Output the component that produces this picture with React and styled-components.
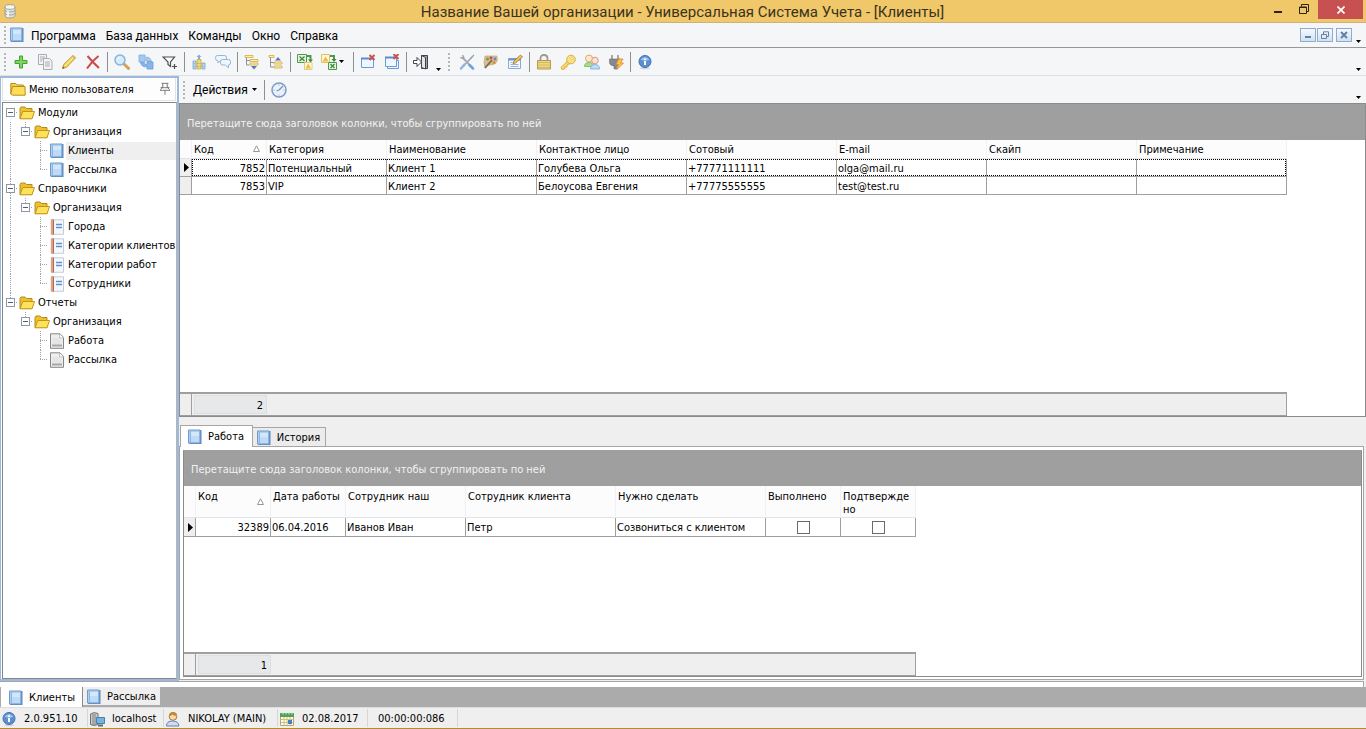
import React, { useState } from "react";
import styled, { createGlobalStyle, css } from "styled-components";

const GlobalStyle = createGlobalStyle`
  * {
    box-sizing: border-box;
  }
  body {
    margin: 0;
    background: #efefef;
  }
  button, input {
    font: inherit;
    color: inherit;
    margin: 0;
  }
  svg {
    display: block;
    flex: none;
  }
`;

const gridFont = `"DejaVu Sans Condensed", Tahoma, "Noto Sans", sans-serif`;
const menuFont = `Roboto, "Segoe UI", sans-serif`;

const Window = styled.div`
  display: flex;
  flex-direction: column;
  min-height: 100vh;
  font-family: ${gridFont};
  font-size: 11px;
  line-height: 14px;
  color: #000;
  border-bottom: 1px solid #b48a2c;
`;

const PlainButton = styled.button`
  display: flex;
  align-items: center;
  justify-content: center;
  padding: 0;
  border: 0;
  background: none;
  cursor: default;
`;

/* title bar */

const TitleBar = styled.header`
  display: flex;
  align-items: center;
  height: 23px;
  padding-left: 2px;
  background: #f0c869;
  border-bottom: 1px solid #cbb27a;
`;

const TitleText = styled.h1`
  flex: 1;
  margin: 0;
  padding: 2px 0 0 82px;
  font-family: ${menuFont};
  font-size: 15px;
  line-height: 20px;
  font-weight: 400;
  text-align: center;
  white-space: nowrap;
  color: #3b3320;
`;

const WindowButton = styled(PlainButton)`
  align-self: flex-start;
  width: 26px;
  height: 18px;
`;

const CloseButton = styled(WindowButton)`
  width: 45px;
  height: 19px;
  margin: 0 3px 0 1px;
  background: #c75050;
`;

/* menu and toolbars */

const MenuBar = styled.nav`
  display: flex;
  align-items: center;
  height: 25px;
  padding: 0 3px;
  background: #f5f6f8;
  border-bottom: 1px solid #95979c;
  font-family: ${menuFont};
  font-size: 12px;
`;

const Grip = styled.span`
  flex: none;
  width: 2px;
  height: 18px;
  margin: 0 3px 0 1px;
  background: repeating-linear-gradient(#b4b6ba 0 2px, transparent 2px 4px);
`;

const MiddleGrip = styled(Grip)`
  margin: 0 5px;
`;

const MenuItem = styled(PlainButton)`
  height: 24px;
  padding-top: 1px;
  margin-left: ${(p) => (p.$first ? 6 : 10)}px;
  white-space: nowrap;
`;

const Spacer = styled.span`
  flex: 1;
`;

const MdiButton = styled(PlainButton)`
  width: 16px;
  height: 14px;
  margin-right: ${(p) => p.$gap || 1}px;
  border: 1px solid #92abc8;
  background: linear-gradient(#f4f9ff, #d0e1f5);
`;

const Overflow = styled(PlainButton)`
  align-self: flex-end;
  width: 10px;
  height: 12px;
`;

const ToolBar = styled.div`
  display: flex;
  align-items: center;
  height: 28px;
  padding: 0 3px;
  background: #f5f6f8;
  border-bottom: 1px solid #dcdfe3;
`;

const ToolButton = styled(PlainButton)`
  flex: none;
  gap: 2px;
  width: ${(p) => (p.$drop ? 34 : 24)}px;
  height: 24px;
  padding-right: ${(p) => (p.$drop ? 3 : 0)}px;
`;

const Separator = styled.span`
  flex: none;
  width: 1px;
  height: 20px;
  margin: 0 2px;
  background: #8c8e92;
`;

const ActionBar = styled(ToolBar)`
  border-bottom: 1px solid #8b8b8b;
  font-family: ${menuFont};
  font-size: 12px;
`;

const ActionButton = styled(PlainButton)`
  gap: 4px;
  height: 24px;
  padding: 0 5px;
`;

/* left panel */

const Main = styled.main`
  flex: 1;
  display: flex;
  background: #efefef;
`;

const SidePanel = styled.aside`
  flex: none;
  display: flex;
  flex-direction: column;
  width: 179px;
  background: #fff;
  border: 2px solid #9db9dc;
  border-left-width: 1px;
`;

const PanelHead = styled.div`
  display: flex;
  align-items: center;
  gap: 3px;
  height: 23px;
  margin: 0 1px 1px;
  padding: 0 3px 0 7px;
  background: #fdfdfe;
  border: 1px solid #dfe3e8;
  border-top: 0;
`;

const PanelTitle = styled.h2`
  flex: 1;
  margin: 0;
  padding-top: 1px;
  font-size: 11px;
  font-weight: 400;
`;

const Tree = styled.ul`
  flex: 1;
  margin: 0 0 0 1px;
  padding: 0;
  list-style: none;
  background: #fff;
  border: 1px solid #868686;
  border-right-color: #b5b5b5;
`;

const dots = "#a0a0a0 0 1px, transparent 1px 2px";
const guideHeight = { through: "100%", tee: "100%", end: "10px", start: "0" };

const TreeRow = styled.li`
  display: flex;
  align-items: center;
  height: 19px;
`;

const Guide = styled.span`
  flex: none;
  display: flex;
  align-items: center;
  justify-content: center;
  width: 15px;
  height: 19px;
  background-repeat: no-repeat;
  ${(p) =>
    p.$line &&
    css`
      background-image: repeating-linear-gradient(${dots}), repeating-linear-gradient(90deg, ${dots});
      background-size: 1px ${guideHeight[p.$line]}, ${p.$line === "through" ? "0 0" : "8px 1px"};
      background-position: 7px 0, 7px 9px;
    `}
`;

const Expander = styled(PlainButton)`
  width: 9px;
  height: 9px;
  border: 1px solid #8e98a5;
  background: #fff;
`;

const TreeLabel = styled(PlainButton)`
  flex: 1;
  justify-content: flex-start;
  height: 18px;
  margin-left: 1px;
  padding-left: 2px;
  white-space: nowrap;
  background: ${(p) => (p.$selected ? "#efefef" : "none")};
`;

const IconSlot = styled.span`
  flex: none;
  display: flex;
  margin-left: 1px;
`;

/* grids */

const Content = styled.section`
  flex: 1;
  min-width: 0;
  display: flex;
  flex-direction: column;
`;

const GridBox = styled.div`
  display: flex;
  flex-direction: column;
  flex: ${(p) => p.$grow} 1 0;
  background: #fff;
  border: 1px solid #8b8b8b;
  border-top-color: #9f9f9f;
`;

const GroupBar = styled.div`
  display: flex;
  align-items: center;
  height: 35px;
  padding: 2px 0 0 7px;
  background: #9f9f9f;
  color: #f1f1f1;
`;

const Table = styled.table`
  table-layout: fixed;
  width: ${(p) => p.$width}px;
  border-collapse: separate;
  border-spacing: 0;
`;

const HeadCell = styled.th`
  height: ${(p) => (p.$tall ? 32 : 19)}px;
  padding: ${(p) => (p.$tall ? 4 : 3)}px 2px 0;
  vertical-align: top;
  font-weight: 400;
  line-height: 13px;
  text-align: left;
  overflow-wrap: anywhere;
  background: #fcfcfd;
  border-right: 1px solid #f0f1f6;
  border-bottom: 1px solid #e3e4ea;
`;

const SortHead = styled.span`
  display: flex;
  align-items: flex-start;
  justify-content: space-between;
  padding-right: 4px;
`;

const SortMark = styled.span`
  padding-top: ${(p) => (p.$tall ? 8 : 2)}px;
`;

const focusX = "repeating-linear-gradient(90deg, #000 0 1px, transparent 1px 2px)";
const focusY = "repeating-linear-gradient(#000 0 1px, transparent 1px 2px)";

const Cell = styled.td`
  height: ${(p) => (p.$tall ? 19 : 18)}px;
  padding: 2px 1px 0;
  text-align: ${(p) => p.$align || "left"};
  white-space: nowrap;
  border-right: 1px solid #9f9f9f;
  border-bottom: 1px solid #9f9f9f;
  ${(p) =>
    p.$focused &&
    css`
      background-image: ${focusX}, ${focusX}, ${focusY}, ${focusY};
      background-position: left top, left bottom, left top, right top;
      background-size: 100% 1px, 100% 1px, ${p.$first ? "1px 100%" : "0 0"}, ${p.$last ? "1px 100%" : "0 0"};
      background-repeat: no-repeat;
    `}
`;

const MarkCell = styled(Cell)`
  padding: 0 3px;
  background: #efefef;
`;

const CheckCell = styled(Cell)`
  padding: 0 1px;
`;

const CheckBox = styled.input`
  display: block;
  appearance: none;
  width: 13px;
  height: 13px;
  margin: 0 auto;
  border: 1px solid #6b6b6b;
  background: #fff;
`;

const Footer = styled.div`
  display: flex;
  align-items: center;
  width: ${(p) => p.$width}px;
  height: 24px;
  margin-top: auto;
  background: #efefef;
  border-top: 2px solid #9f9f9f;
  border-right: 1px solid #9f9f9f;
  border-bottom: 1px solid #9f9f9f;
`;

const FooterMark = styled.span`
  width: 12px;
  height: 100%;
  border-right: 1px solid #9f9f9f;
`;

const FooterCount = styled.output`
  width: 73px;
  height: 19px;
  margin-left: 2px;
  padding: 3px 3px 0;
  text-align: right;
  background: #e7e8ea;
  border: 1px solid #dcdee0;
`;

/* tabs */

const TabStrip = styled.div`
  display: flex;
  align-items: flex-end;
  height: 29px;
  padding-left: 1px;
`;

const Tab = styled(PlainButton)`
  gap: 5px;
  width: 73px;
  height: ${(p) => (p.$active ? 22 : 19)}px;
  padding: ${(p) => (p.$active ? "0 2px 0 0" : "2px 2px 0 0")};
  margin-bottom: ${(p) => (p.$active ? -1 : 0)}px;
  border: 1px solid #a6a6a6;
  border-bottom-width: 0;
  border-left-width: ${(p) => (p.$active ? 1 : 0)}px;
  background: ${(p) => (p.$active ? "#fff" : "#ececec")};
  z-index: ${(p) => (p.$active ? 1 : 0)};
`;

const TabPage = styled.div`
  display: flex;
  flex: 227 1 0;
  margin: 0 2px 1px 0;
  padding: 3px 1px 2px 3px;
  background: #fff;
  border: 1px solid #a6a6a6;
`;

const DockEdge = styled.div`
  height: 6px;
  margin-right: 2px;
  background: #fff;
  border-top: 1px solid #a6a6a6;
  border-right: 1px solid #a6a6a6;
`;

const WindowTabs = styled.div`
  display: flex;
  align-items: flex-start;
  height: 21px;
  padding-left: 1px;
  background: #ababab;
  border-bottom: 1px solid #dedede;
`;

const WindowTab = styled(PlainButton)`
  gap: 5px;
  width: ${(p) => (p.$active ? 82 : 77)}px;
  height: ${(p) => (p.$active ? 20 : 18)}px;
  padding-top: 2px;
  background: ${(p) => (p.$active ? "#fff" : "#efefef")};
  border-right: 1px solid ${(p) => (p.$active ? "#8b8b8b" : "#efefef")};
`;

const StatusBar = styled.footer`
  display: flex;
  align-items: center;
  height: 20px;
  background: #efefef;
`;

const StatusItem = styled.div`
  display: flex;
  align-items: center;
  gap: 7px;
  width: ${(p) => p.$width}px;
  height: 18px;
  padding: 2px 0 0 ${(p) => (p.$plain ? 10 : 1)}px;
  border-right: 1px solid #d6d6d6;
  white-space: nowrap;
`;

const shapes = {
  plus: <path d="M6.5 2h3v4.5H14v3H9.5V14h-3V9.5H2v-3h4.5z" fill="#7fd45f" stroke="#3fa52d" />,
  copy: (
    <g fill="#f3f4f5" stroke="#a9adb3">
      <path d="M1.5.5h8v10h-8z" />
      <path d="M3 3h5M3 5h5M3 7h2" />
      <path d="M6.5 4.5h6L15 7v8.5H6.5z" />
      <path d="M8 8h5M8 10h5M8 12h5" />
    </g>
  ),
  pencil: (
    <g strokeLinejoin="round">
      <path d="M1.5 14.5l1.2-4L12 1.5l2.6 2.3-9 9.4z" fill="#f5d65c" stroke="#c39a2c" />
      <path d="M4 12l8.5-9" stroke="#fff0a8" />
      <path d="M1.5 14.5l.6-2 1.4 1.4z" fill="#5a4a30" />
      <path d="M11 2.5l2.6 2.4 1-1.1L12 1.5z" fill="#dba98c" />
    </g>
  ),
  remove: (
    <path d="M2.5 2c3 3.5 7 8 11.5 12M13.5 2C9 5.5 5 10 2 14.5" fill="none" stroke="#c94b4b" strokeWidth="2" />
  ),
  search: (
    <g>
      <path d="M9.5 9.5l5 4.8" stroke="#d3a25a" strokeWidth="3" strokeLinecap="round" />
      <circle cx="6" cy="6" r="5" fill="#d4ecfb" stroke="#86b4da" strokeWidth="1.5" />
      <path d="M3.5 6a2.5 2.5 0 0 1 3-2.6" fill="none" stroke="#fff" />
    </g>
  ),
  refresh: (
    <g>
      <path d="M1 1h6v2.5Q12.5 2 13.5 8h-3q-.5-2-3.5-2v2.5L1 8z" fill="#a4c9ee" stroke="#7fadde" strokeWidth=".8" />
      <path d="M15 15H9v-2.5Q3.500 14 2.500 8l3 .5q.5 2 3.500 2v-3l6 .5z" fill="#86b6e6" stroke="#6b9dd3" strokeWidth=".8" />
    </g>
  ),
  filter: (
    <g fill="none" stroke="#4a4d52" strokeWidth="1.2">
      <path d="M1 3h11.5L8.5 8v4.5L6 10.5V8z" fill="#fff" />
      <path d="M12.5 10v5M10 12.5h5" />
    </g>
  ),
  sum: (
    <g>
      <path d="M2 7h3v8H2zM11 9h3v6h-3z" fill="#b9d6f2" stroke="#79a6d6" strokeWidth=".8" />
      <path d="M6 5.5h4V15H6z" fill="#f6da6b" stroke="#c9a43a" strokeWidth=".8" />
      <path d="M2 9.5h12M2 12.5h12" stroke="#a9b79a" strokeWidth=".8" />
      <path d="M8 .5L10.5 3H9v2H7V3H5.5z" fill="#7eaee0" />
    </g>
  ),
  chat: (
    <g fill="#eef5fc" stroke="#94b4d8">
      <path d="M2.5 1.5h7q2 0 2 2V5q0 2-2 2H5L3 9V7Q.5 6.5.5 4.5v-1q0-2 2-2z" />
      <path d="M7.5 5.5h6q2 0 2 2V9q0 2-2 2v3l-3-3h-3q-2 0-2-2V7.5q0-2 2-2z" />
    </g>
  ),
  expand: (
    <g>
      <path d="M2.5 2v9h3M2.5 6.5h4" fill="none" stroke="#8e9196" />
      <path d="M1 1.5h8v2H1zM6 5.5h8v2H6zM6 9h8v2H6z" fill="#fff0b2" stroke="#d4a83f" strokeWidth=".8" />
      <path d="M7 12h6l-3 3.5z" fill="#5a78b8" />
    </g>
  ),
  collapse: (
    <g>
      <path d="M2.5 2v11h3M2.5 8.5h4" fill="none" stroke="#8e9196" />
      <path d="M1 1.5h5v2H1zM6 8h8v2H6zM6 12h8v2H6z" fill="#fff0b2" stroke="#d4a83f" strokeWidth=".8" />
      <path d="M7 6.5h6L10 3z" fill="#5a78b8" />
    </g>
  ),
  exportXls: (
    <g>
      <path d="M.5.5h9v8h-9z" fill="#e6f5df" stroke="#4f9a4a" />
      <path d="M2.5 2.5l5 4.500M7.500 2.500L2.500 7" stroke="#3d8a3a" strokeWidth="1.3" />
      <path d="M10 2h3.5v4" fill="none" stroke="#4f9a4a" strokeWidth="2" />
      <path d="M11 5.500h5l-2.500 3z" fill="#3d8a3a" />
      <path d="M7.500 8.500H15v7H7.500z" fill="#fff7d8" stroke="#dcbf6c" strokeWidth=".8" />
      <path d="M8.500 14.500l2.700-5 2.700 5z" fill="#f1bb35" />
    </g>
  ),
  importXls: (
    <g>
      <path d="M.5.5h8v8h-8z" fill="#fff7d8" stroke="#dcbf6c" />
      <path d="M1.5 7.5l3-5 3 5z" fill="#f1bb35" />
      <path d="M9 2h4v4" fill="none" stroke="#4f9a4a" strokeWidth="2" />
      <path d="M10.5 5h5L13 8z" fill="#3d8a3a" />
      <path d="M7.5 8.5h8v7h-8z" fill="#e6f5df" stroke="#4f9a4a" />
      <path d="M9.5 10l4 4M13.5 10l-4 4" stroke="#3d8a3a" strokeWidth="1.3" />
    </g>
  ),
  closeOne: (
    <g>
      <path d="M1.5 4.5h12v9h-12z" fill="#eff6ff" stroke="#6c9ad4" />
      <path d="M1 4.5h12" stroke="#5b8bcc" strokeWidth="2" />
      <path d="M9.5 1l5 5M14.5 1l-5 5" stroke="#c2564e" strokeWidth="2" />
    </g>
  ),
  closeAll: (
    <g>
      <path d="M3.5 6.5h11v8h-11z" fill="#eff6ff" stroke="#6c9ad4" />
      <path d="M1.5 3.5h11v9h-11z" fill="#eff6ff" stroke="#6c9ad4" />
      <path d="M1 3.5h12" stroke="#5b8bcc" strokeWidth="2" />
      <path d="M9.5 0l5 5M14.5 0l-5 5" stroke="#c2564e" strokeWidth="2" />
    </g>
  ),
  exit: (
    <g fill="#fff" stroke="#404347">
      <path d="M8.5 1.5h6v13h-6z" fill="#9da1a6" />
      <path d="M8.5 1.5l4 2V15l-4-1.5z" fill="#e6e7e9" />
      <path d="M.5 6.5H4v-3L8.5 8 4 12.500v-3H.5z" />
    </g>
  ),
  tools: (
    <g>
      <path d="M13 3L4.5 12" stroke="#9ba3ad" strokeWidth="1.5" />
      <path d="M5.5 10.5l-3.5 4" stroke="#8fb4df" strokeWidth="2.5" strokeLinecap="round" />
      <path d="M4 4l9 9.500" stroke="#a7adb5" strokeWidth="2" strokeLinecap="round" />
      <path d="M1.5 3.500l2.500 1 .8-1L3.500 1M12 4l3-3" fill="none" stroke="#9ba3ad" strokeWidth="1.4" />
      <path d="M10.5 11l3.500 3.500" stroke="#6fa3dc" strokeWidth="2.5" strokeLinecap="round" />
    </g>
  ),
  paint: (
    <g>
      <path d="M2 2h12q1 5-1 7t-6 2-5 3q-2-5 0-12z" fill="#d9bd93" stroke="#c5a87c" strokeWidth=".7" />
      <circle cx="4.5" cy="5" r="1.5" fill="#6f9f55" />
      <circle cx="8" cy="4" r="1.4" fill="#c75145" />
      <circle cx="12" cy="5" r="1.4" fill="#5d88c4" />
      <circle cx="11" cy="8.5" r="1.5" fill="#d79038" />
      <path d="M2 14l7-8" stroke="#7b6a4b" strokeWidth="1.8" />
    </g>
  ),
  form: (
    <g>
      <path d="M1.5 4.5h12v10h-12z" fill="#f3f8ff" stroke="#8aa9d6" />
      <path d="M1.5 5.5h12" stroke="#6d95d0" strokeWidth="2" />
      <path d="M3.5 8.5h2M3.5 10.5h8M3.5 12.5h8" stroke="#9ab2d8" />
      <path d="M6 9.5L7 7l6.500-6 2 2L8.500 9z" fill="#f2c94b" stroke="#8d7435" strokeWidth=".8" />
    </g>
  ),
  lock: (
    <g>
      <path d="M4.5 7V4.5Q4.5 1 8 1t3.5 3.5V7" fill="none" stroke="#9b9b8e" strokeWidth="1.8" />
      <path d="M1.5 6.5h13V15h-13z" fill="#ecd487" stroke="#b89a4c" />
      <path d="M2 8.5h12M2 11h12M2 13.5h12" stroke="#d9ba62" />
    </g>
  ),
  key: (
    <g>
      <path d="M8.5 6L1 13.5l1 2 2.5-.5.5-2h2v-2l4-2" fill="#f7d768" stroke="#d9ae3f" />
      <circle cx="11" cy="5.5" r="4.3" fill="#fae184" stroke="#d9ae3f" />
      <circle cx="12" cy="4.5" r="1.2" fill="#fff" stroke="#d9ae3f" strokeWidth=".6" />
    </g>
  ),
  users: (
    <g>
      <circle cx="5" cy="4.5" r="3.5" fill="#fbe7d2" stroke="#e0a864" />
      <path d="M.5 12.5q0-4 4.500-4t4.500 4z" fill="#a7dc8d" stroke="#79b965" strokeWidth=".8" />
      <circle cx="11" cy="6.5" r="3.3" fill="#fbe1d2" stroke="#d99a85" />
      <path d="M6.5 15q0-4.500 4.500-4.500t4.500 4.500z" fill="#bcdcf8" stroke="#7faad8" strokeWidth=".8" />
    </g>
  ),
  plug: (
    <g>
      <path d="M4 1v4M10 1v4" stroke="#a7a7a7" strokeWidth="2" />
      <path d="M1.5 5h11v4q-1 3-4 3v3H6v-3q-4-.5-4.500-3z" fill="#85888e" stroke="#6c6f75" strokeWidth=".6" />
      <path d="M10.5 5H15l-2.500 4h3L9 15.500l1.500-5H8z" fill="#fac24f" stroke="#df8a2a" strokeWidth=".8" />
    </g>
  ),
  info: (
    <g>
      <ellipse cx="8" cy="14.3" rx="5" ry="1" fill="#cfd6e0" />
      <circle cx="8" cy="7.5" r="6" fill="#5a8fd4" stroke="#456fb0" />
      <path d="M3.5 5.500Q8 .5 12.500 5.500 8 8 3.500 5.500z" fill="#9dc2ee" />
      <path d="M7 4.5h2V6H7zM7 7h2v4H7z" fill="#fff" />
    </g>
  ),
  clock: (
    <g>
      <circle cx="8" cy="8" r="7" fill="#e9f2fc" stroke="#7e9cc8" strokeWidth="1.5" />
      <path d="M8 8l4-4M8 8L5.5 9" stroke="#7b8db0" strokeWidth="1.2" />
      <path d="M8 2.5v1M8 12.5v1M2.5 8h1M12.5 8h1" stroke="#8aa5cc" />
    </g>
  ),
  book: (
    <g>
      <path d="M2 1h12.5v14H2z" fill="#5c88bd" />
      <path d="M1.5 1H13v13H1.5z" fill="#aecff2" stroke="#6f9bce" />
      <path d="M4 3h8v10H4z" fill="#bfdaf6" />
      <path d="M4 3h8v4H4z" fill="#d3e7fb" />
      <path d="M3.5 1.5v12" stroke="#8fb6e2" />
    </g>
  ),
  notebook: (
    <g>
      <path d="M3.5.8h11v14.5h-11z" fill="#f4f8fc" stroke="#c3ccd8" />
      <path d="M2 .5h3v15H2z" fill="#b9694a" />
      <path d="M1 2h3M1 4h3M1 6h3M1 8h3M1 10h3M1 12h3M1 14h3" stroke="#f4dccb" />
      <path d="M7 5.5h6M7 8.5h6" stroke="#5f91d0" strokeWidth="1.6" />
    </g>
  ),
  report: (
    <g>
      <path d="M1.5.8H11l3.5 3.5v11h-13z" fill="#eeeeef" stroke="#858585" />
      <path d="M10.5 1v4h4" fill="#fff" stroke="#b0b0b0" strokeWidth=".8" />
      <path d="M3.5 6h6M3.5 8h9M3.5 10h9" stroke="#dadbdd" />
      <path d="M3 12.5h10" stroke="#a5a6a8" strokeWidth="2" />
    </g>
  ),
  folder: (
    <g strokeLinejoin="round">
      <path d="M1 13.5v-10L2 2h4l1.5 1.5H13v10z" fill="#eec02e" stroke="#b58a1c" />
      <path d="M1 13.8l2.8-7.3h11.7L13 13.8z" fill="#ffe25c" stroke="#c0961f" />
    </g>
  ),
  folderClosed: (
    <g strokeLinejoin="round">
      <path d="M.8 13V2.5h5L7.3 4h6v2" fill="#f6d254" stroke="#b88d1d" />
      <path d="M2.5 5.5H15l.2 8.7H2.8L.8 13z" fill="#ffdf57" stroke="#b88d1d" />
    </g>
  ),
  pin: (
    <path
      d="M4 1.5h8M5.5 1.5v5M10.5 1.5v5M3 6.5l2.5-.5M13 6.5L10.5 6M2.5 9.5h11M3 9.5v-1l2-2h6l2 2v1M8 9.5v5"
      fill="none"
      stroke="#6c6c6c"
    />
  ),
  database: (
    <g stroke="#929894" strokeWidth=".8">
      <path d="M3 4v9q0 2 5 2t5-2V4z" fill="#dfe2df" />
      <ellipse cx="8" cy="4" rx="5" ry="2.3" fill="#f6f7f5" />
      <path d="M3 7q0 2 5 2t5-2M3 10q0 2 5 2t5-2" fill="none" />
      <path d="M6 8v6" stroke="#fff" strokeWidth="1.5" />
    </g>
  ),
  server: (
    <g>
      <path d="M1.5 3Q5 .5 9 2.500v11q-4 2-7.500 0z" fill="#c9cccc" stroke="#6d7274" />
      <path d="M4 3v11M6 3v11" stroke="#7c8284" />
      <path d="M7.5 6.5h8v6h-8z" fill="#6fb5e4" stroke="#4d7fa8" />
      <path d="M9 14.5h5" stroke="#5f6769" strokeWidth="2" />
    </g>
  ),
  user: (
    <g>
      <path d="M1.5 15q0-5 6-5t6.500 5z" fill="#cfdcf3" stroke="#6581b4" />
      <circle cx="8" cy="5.5" r="3.8" fill="#fbd9ad" stroke="#a67836" />
      <path d="M4 5Q4 1 8 1t4 4Q9 5 7.500 3.500 6 5 4 5z" fill="#bf8b32" />
    </g>
  ),
  calendar: (
    <g>
      <path d="M1.5 2.5h13v12h-13z" fill="#fffbe6" stroke="#b7a777" />
      <path d="M1 2h14v4H1z" fill="#4da455" />
      <path d="M4 .5v3M7 .5v3M10 .5v3M13 .5v3" stroke="#d8e8d8" />
      <path d="M2 8.5h12M2 11.5h12M5 6v8M8 6v8M11 6v8" stroke="#cfc08a" />
      <path d="M9 9h4v4H9z" fill="#4b7fc3" />
    </g>
  ),
};

const Icon = ({ name, size = 16 }) => (
  <svg width={size} height={size} viewBox="0 0 16 16" aria-hidden="true">
    {shapes[name]}
  </svg>
);

const Arrow = () => (
  <svg width="5" height="3" viewBox="0 0 5 3" aria-hidden="true">
    <path d="M0 0h5L2.5 3z" fill="#000" />
  </svg>
);

const menu = ["Программа", "База данных", "Команды", "Окно", "Справка"];

const mainTools = [
  ["plus", "copy", "pencil", "remove"],
  ["search", "refresh", "filter"],
  ["sum", "chat"],
  ["expand", "collapse"],
  ["exportXls", "importXls"],
  ["closeOne", "closeAll"],
  ["exit"],
];

const serviceTools = [["tools", "paint", "form"], ["lock", "key", "users", "plug"], ["info"]];

const tree = [
  { id: "modules", title: "Модули", icon: "folder", guides: ["start"] },
  { id: "m-org", title: "Организация", icon: "folder", guides: ["through", "end"] },
  { id: "clients", title: "Клиенты", icon: "book", guides: ["through", null, "tee"] },
  { id: "mailing", title: "Рассылка", icon: "book", guides: ["through", null, "end"] },
  { id: "refs", title: "Справочники", icon: "folder", guides: ["tee"] },
  { id: "r-org", title: "Организация", icon: "folder", guides: ["through", "end"] },
  { id: "cities", title: "Города", icon: "notebook", guides: ["through", null, "tee"] },
  { id: "ccat", title: "Категории клиентов", icon: "notebook", guides: ["through", null, "tee"] },
  { id: "wcat", title: "Категории работ", icon: "notebook", guides: ["through", null, "tee"] },
  { id: "staff", title: "Сотрудники", icon: "notebook", guides: ["through", null, "end"] },
  { id: "reports", title: "Отчеты", icon: "folder", guides: ["end"] },
  { id: "p-org", title: "Организация", icon: "folder", guides: [null, "end"] },
  { id: "work", title: "Работа", icon: "report", guides: [null, null, "tee"] },
  { id: "rmail", title: "Рассылка", icon: "report", guides: [null, null, "end"] },
];

const clientColumns = [
  { title: "Код", width: 75, align: "right", sort: true },
  { title: "Категория", width: 120 },
  { title: "Наименование", width: 150 },
  { title: "Контактное лицо", width: 150 },
  { title: "Сотовый", width: 150 },
  { title: "E-mail", width: 150 },
  { title: "Скайп", width: 150 },
  { title: "Примечание", width: 150 },
];

const clientRows = [
  ["7852", "Потенциальный", "Клиент 1", "Голубева Ольга", "+77771111111", "olga@mail.ru", "", ""],
  ["7853", "VIP", "Клиент 2", "Белоусова Евгения", "+77775555555", "test@test.ru", "", ""],
];

const workColumns = [
  { title: "Код", width: 75, align: "right", sort: true },
  { title: "Дата работы", width: 75 },
  { title: "Сотрудник наш", width: 120 },
  { title: "Сотрудник клиента", width: 150 },
  { title: "Нужно сделать", width: 150 },
  { title: "Выполнено", width: 75 },
  { title: "Подтверждено", width: 75 },
];

const workRows = [["32389", "06.04.2016", "Иванов Иван", "Петр", "Созвониться с клиентом", false, false]];

const Tools = ({ groups }) =>
  groups.map((group, i) => (
    <React.Fragment key={group[0]}>
      {i > 0 && <Separator />}
      {group.map((name) => (
        <ToolButton key={name} type="button" aria-label={name} $drop={name === "importXls"}>
          <Icon name={name} />
          {name === "importXls" && <Arrow />}
        </ToolButton>
      ))}
    </React.Fragment>
  ));

const DataGrid = ({ columns, rows, tall, focused, grow }) => {
  const width = columns.reduce((sum, c) => sum + c.width, 12);
  return (
    <GridBox $grow={grow}>
      <GroupBar>Перетащите сюда заголовок колонки, чтобы сгруппировать по ней</GroupBar>
      <Table $width={width}>
        <colgroup>
          <col width="12" />
          {columns.map((c) => (
            <col key={c.title} width={c.width} />
          ))}
        </colgroup>
        <thead>
          <tr>
            <HeadCell as="td" $tall={tall} />
            {columns.map((c) => (
              <HeadCell key={c.title} $tall={tall} scope="col">
                {c.sort ? (
                  <SortHead>
                    {c.title}
                    <SortMark $tall={tall}>
                      <svg width="7" height="7" viewBox="0 0 7 7" aria-hidden="true">
                        <path d="M.5 6.5h6L3.5.8z" fill="#fff" stroke="#969696" />
                      </svg>
                    </SortMark>
                  </SortHead>
                ) : (
                  c.title
                )}
              </HeadCell>
            ))}
          </tr>
        </thead>
        <tbody>
          {rows.map((row, r) => (
            <tr key={row[0]}>
              <MarkCell $tall={tall}>
                {r === 0 && (
                  <svg width="6" height="9" viewBox="0 0 6 9" aria-hidden="true">
                    <path d="M1 0l5 4.5L1 9z" fill="#000" />
                  </svg>
                )}
              </MarkCell>
              {row.map((value, i) =>
                typeof value === "boolean" ? (
                  <CheckCell key={columns[i].title} $tall={tall}>
                    <CheckBox type="checkbox" defaultChecked={value} aria-label={columns[i].title} />
                  </CheckCell>
                ) : (
                  <Cell
                    key={columns[i].title}
                    $align={columns[i].align}
                    $tall={tall}
                    $focused={focused && r === 0}
                    $first={i === 0}
                    $last={i === row.length - 1}
                  >
                    {value}
                  </Cell>
                )
              )}
            </tr>
          ))}
        </tbody>
      </Table>
      <Footer $width={width}>
        <FooterMark />
        <FooterCount>{rows.length}</FooterCount>
      </Footer>
    </GridBox>
  );
};

const App = () => {
  const [selected, setSelected] = useState("clients");
  const [tab, setTab] = useState("Работа");

  return (
    <Window>
      <GlobalStyle />
      <TitleBar>
        <Icon name="database" />
        <TitleText>Название Вашей организации - Универсальная Система Учета - [Клиенты]</TitleText>
        <WindowButton type="button" aria-label="Свернуть">
          <svg width="10" height="10" viewBox="0 0 10 10">
            <path d="M1 8h8" stroke="#2a2415" strokeWidth="2" />
          </svg>
        </WindowButton>
        <WindowButton type="button" aria-label="Развернуть">
          <svg width="10" height="10" viewBox="0 0 10 10">
            <path d="M.5 3h7v6.5h-7zM.5 3.5h7M2.5 2.5v-2h7v7h-2" fill="none" stroke="#2a2415" />
          </svg>
        </WindowButton>
        <CloseButton type="button" aria-label="Закрыть">
          <svg width="8" height="8" viewBox="0 0 8 8">
            <path d="M.5.5l7 7M7.5.5l-7 7" stroke="#fff" strokeWidth="1.7" />
          </svg>
        </CloseButton>
      </TitleBar>

      <MenuBar>
        <Grip />
        <Icon name="book" />
        {menu.map((title, i) => (
          <MenuItem key={title} type="button" $first={i === 0}>
            {title}
          </MenuItem>
        ))}
        <Spacer />
        <MdiButton type="button" aria-label="Свернуть окно">
          <svg width="8" height="8" viewBox="0 0 8 8">
            <path d="M1 6h6" stroke="#66809f" strokeWidth="2" />
          </svg>
        </MdiButton>
        <MdiButton type="button" aria-label="Восстановить окно" $gap={3}>
          <svg width="8" height="8" viewBox="0 0 8 8">
            <path d="M.5 3.5h5v4h-5zM2.5 3V.8h5v4.7H6" fill="none" stroke="#66809f" />
          </svg>
        </MdiButton>
        <MdiButton type="button" aria-label="Закрыть окно">
          <svg width="8" height="8" viewBox="0 0 8 8">
            <path d="M1 1l6 6M7 1L1 7" stroke="#66809f" strokeWidth="2" />
          </svg>
        </MdiButton>
        <Overflow type="button" aria-label="Параметры меню">
          <Arrow />
        </Overflow>
      </MenuBar>

      <ToolBar>
        <Grip />
        <Tools groups={mainTools} />
        <Overflow type="button" aria-label="Параметры панели">
          <Arrow />
        </Overflow>
        <MiddleGrip />
        <Tools groups={serviceTools} />
        <Spacer />
        <Overflow type="button" aria-label="Параметры сервиса">
          <Arrow />
        </Overflow>
      </ToolBar>

      <Main>
        <SidePanel>
          <PanelHead>
            <Icon name="folderClosed" />
            <PanelTitle>Меню пользователя</PanelTitle>
            <PlainButton type="button" aria-label="Закрепить">
              <Icon name="pin" size={14} />
            </PlainButton>
          </PanelHead>
          <Tree>
            {tree.map((node) => (
              <TreeRow key={node.id}>
                {node.guides.map((line, i) => (
                  <Guide key={i} $line={line}>
                    {node.icon === "folder" && i === node.guides.length - 1 && (
                      <Expander type="button" aria-label={"Свернуть " + node.title}>
                        <svg width="5" height="1" viewBox="0 0 5 1">
                          <path d="M0 .5h5" stroke="#4b5d7a" />
                        </svg>
                      </Expander>
                    )}
                  </Guide>
                ))}
                <IconSlot>
                  <Icon name={node.icon} />
                </IconSlot>
                <TreeLabel
                  type="button"
                  $selected={node.id === selected}
                  onClick={() => setSelected(node.id)}
                >
                  {node.title}
                </TreeLabel>
              </TreeRow>
            ))}
          </Tree>
        </SidePanel>

        <Content>
          <ActionBar>
            <Grip />
            <ActionButton type="button">
              Действия
              <Arrow />
            </ActionButton>
            <Separator />
            <ToolButton type="button" aria-label="Планировщик">
              <Icon name="clock" />
            </ToolButton>
            <Spacer />
            <Overflow type="button" aria-label="Параметры действий">
              <Arrow />
            </Overflow>
          </ActionBar>
          <DataGrid columns={clientColumns} rows={clientRows} focused grow={311} />
          <TabStrip>
            {["Работа", "История"].map((title) => (
              <Tab key={title} type="button" $active={title === tab} onClick={() => setTab(title)}>
                <Icon name="book" />
                {title}
              </Tab>
            ))}
          </TabStrip>
          <TabPage>
            <DataGrid columns={workColumns} rows={workRows} tall grow={1} />
          </TabPage>
        </Content>
      </Main>

      <DockEdge />
      <WindowTabs>
        <WindowTab type="button" $active>
          <Icon name="book" />
          Клиенты
        </WindowTab>
        <WindowTab type="button">
          <Icon name="book" />
          Рассылка
        </WindowTab>
      </WindowTabs>

      <StatusBar>
        <StatusItem $width={88}>
          <Icon name="info" />
          2.0.951.10
        </StatusItem>
        <StatusItem $width={76}>
          <Icon name="server" />
          localhost
        </StatusItem>
        <StatusItem $width={114}>
          <Icon name="user" />
          NIKOLAY (MAIN)
        </StatusItem>
        <StatusItem $width={90}>
          <Icon name="calendar" />
          02.08.2017
        </StatusItem>
        <StatusItem $width={90} $plain>
          00:00:00:086
        </StatusItem>
      </StatusBar>
    </Window>
  );
};

export default App;
